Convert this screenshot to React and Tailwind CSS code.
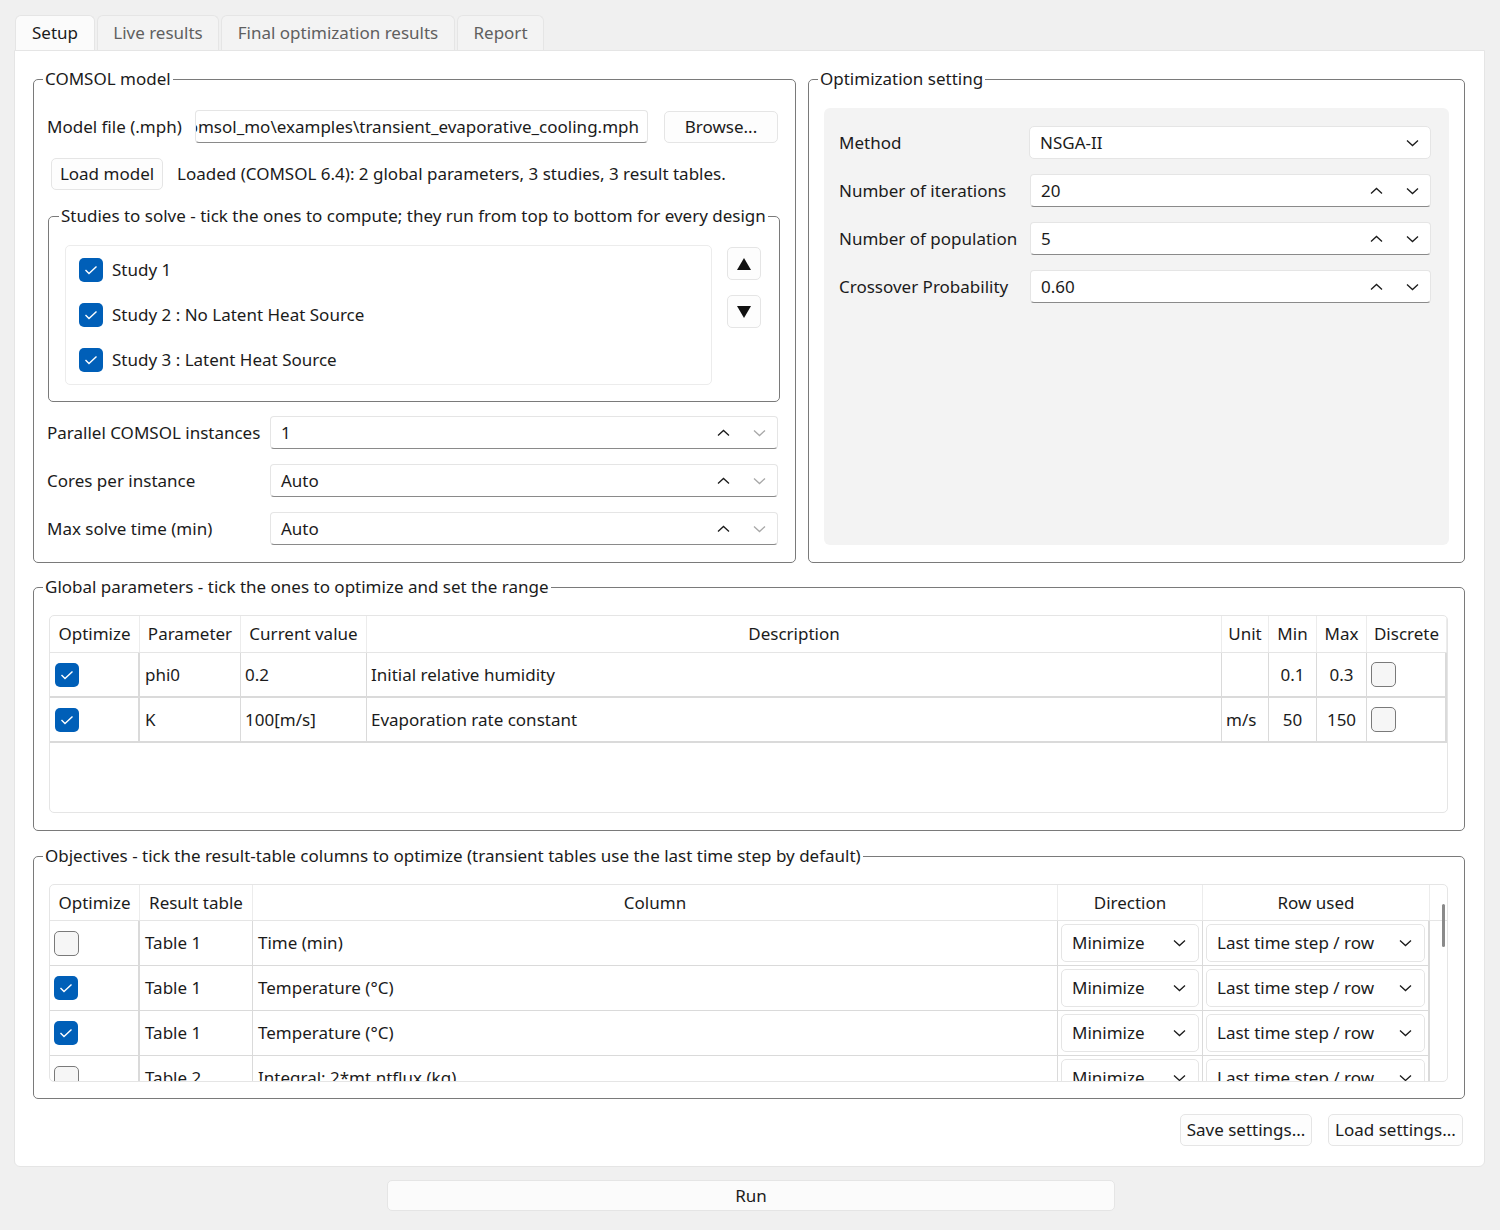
import React from 'react';

const ChevronDown = ({ className = 'text-[#1b1b1b]' }) => (
  <svg width="13" height="8" viewBox="0 0 13 8" fill="none" className={className}>
    <path d="M1 1.5L6.5 6.5L12 1.5" stroke="currentColor" strokeWidth="1.3" />
  </svg>
);

const ChevronUp = ({ className = 'text-[#1b1b1b]' }) => (
  <svg width="13" height="8" viewBox="0 0 13 8" fill="none" className={className}>
    <path d="M1 6.5L6.5 1.5L12 6.5" stroke="currentColor" strokeWidth="1.3" />
  </svg>
);

const Check = ({ checked }) =>
  checked ? (
    <span className="flex h-[24px] w-[24px] shrink-0 items-center justify-center rounded-[5px] bg-[#005fb8]">
      <svg width="14" height="10" viewBox="0 0 14 10" fill="none">
        <path d="M1.5 5L5 8.5L12.5 1.5" stroke="white" strokeWidth="1.4" />
      </svg>
    </span>
  ) : (
    <span className="h-[25px] w-[25px] shrink-0 rounded-[5px] border border-[#7a7a7a] bg-[#f6f6f6]" />
  );

const Group = ({ title, className = '', children }) => (
  <fieldset className={`min-w-0 rounded-[5px] border border-[#7a7a7a] ${className}`}>
    <legend className="ml-[9px] px-[2px] leading-[24px]">{title}</legend>
    {children}
  </fieldset>
);

const Button = ({ label, className = '' }) => (
  <button
    type="button"
    className={`flex h-[32px] items-center justify-center rounded-[5px] border border-[#e5e5e5] bg-[#fdfdfd] ${className}`}
  >
    {label}
  </button>
);

const Spin = ({ value, downDisabled, className = '' }) => (
  <div
    className={`flex h-[33px] items-center rounded-[4px] border border-[#e5e5e5] border-b-[#8a8a8a] bg-white pl-[10px] pr-[11px] ${className}`}
  >
    <span className="flex-1">{value}</span>
    <ChevronUp />
    <span className="ml-[23px]">
      <ChevronDown className={downDisabled ? 'text-[#a8a8a8]' : 'text-[#1b1b1b]'} />
    </span>
  </div>
);

const Combo = ({ value, className = '' }) => (
  <div
    className={`flex items-center justify-between rounded-[5px] border border-[#e5e5e5] bg-white pl-[10px] pr-[11px] ${className}`}
  >
    <span>{value}</span>
    <ChevronDown />
  </div>
);

const Triangle = ({ down }) => (
  <svg width="14" height="12" viewBox="0 0 14 12">
    <polygon points={down ? '0,0 14,0 7,12' : '7,0 14,12 0,12'} fill="#111" />
  </svg>
);

const tabs = [
  { label: 'Setup', w: 'w-[80px]' },
  { label: 'Live results', w: 'w-[122px]' },
  { label: 'Final optimization results', w: 'w-[234px]' },
  { label: 'Report', w: 'w-[87px]' },
];

const studies = ['Study 1', 'Study 2 : No Latent Heat Source', 'Study 3 : Latent Heat Source'];

const spins = [
  { label: 'Parallel COMSOL instances', value: '1' },
  { label: 'Cores per instance', value: 'Auto' },
  { label: 'Max solve time (min)', value: 'Auto' },
];

const optRows = [
  { label: 'Number of iterations', value: '20' },
  { label: 'Number of population', value: '5' },
  { label: 'Crossover Probability', value: '0.60' },
];

const params = [
  { name: 'phi0', value: '0.2', desc: 'Initial relative humidity', unit: '', min: '0.1', max: '0.3' },
  { name: 'K', value: '100[m/s]', desc: 'Evaporation rate constant', unit: 'm/s', min: '50', max: '150' },
];

const objectives = [
  { checked: false, table: 'Table 1', column: 'Time (min)' },
  { checked: true, table: 'Table 1', column: 'Temperature (°C)' },
  { checked: true, table: 'Table 1', column: 'Temperature (°C)' },
  { checked: false, table: 'Table 2', column: 'Integral: 2*mt.ntflux (kg)' },
];

const gCols = 'grid grid-cols-[90px_101px_126px_855px_47px_48px_50px_1fr]';
const oCols = 'grid grid-cols-[90px_113px_805px_145px_227px_1fr]';
const hCell = 'flex items-center justify-center border-r border-[#ececec]';
const bCell = 'flex items-center border-r border-[#dadada]';

export default function App() {
  return (
    <div className="min-h-[1230px] bg-[#f0f0f0] px-[14px] pt-[15px] font-['Noto_Sans',sans-serif] text-[17px] leading-[22px] text-[#1b1b1b]">
      {/* tab bar */}
      <div className="flex gap-[2px] pl-[1px]">
        {tabs.map((t, i) => (
          <div
            key={t.label}
            className={`flex h-[35px] items-center justify-center whitespace-nowrap rounded-t-[6px] border border-b-0 border-[#e5e5e5] ${t.w} ${
              i === 0 ? 'bg-[#fbfbfb] text-[#1b1b1b]' : 'bg-[#f3f3f3] text-[#5f5f5f]'
            }`}
          >
            {t.label}
          </div>
        ))}
      </div>

      {/* tab page */}
      <div className="w-[1471px] rounded-b-[6px] border border-[#e5e5e5] bg-white pl-[18px] pr-[19px] pt-[16px] pb-[20px]">
        <div className="flex gap-[12px]">
          <Group title="COMSOL model" className="h-[496px] w-[763px]">
            <div className="pl-[13px] pr-[17px] pt-[19px]">
              <div className="flex h-[33px] items-center">
                <span className="w-[148px] shrink-0">Model file (.mph)</span>
                <div className="flex h-[33px] min-w-0 flex-1 items-center justify-end overflow-hidden rounded-[4px] border border-[#e5e5e5] border-b-[#8a8a8a] bg-white px-[1px]">
                  <span className="whitespace-nowrap pr-[7px]">
                    comsol_mo\examples\transient_evaporative_cooling.mph
                  </span>
                </div>
                <Button label="Browse..." className="ml-[16px] w-[114px] shrink-0" />
              </div>

              <div className="mt-[15px] flex items-center">
                <Button label="Load model" className="ml-[4px] w-[112px]" />
                <span className="ml-[14px]">
                  Loaded (COMSOL 6.4): 2 global parameters, 3 studies, 3 result tables.
                </span>
              </div>

              <fieldset className="ml-[1px] -mr-[2px] mt-[14px] h-[198px] min-w-0 rounded-[5px] border border-[#7a7a7a]">
                <legend className="ml-[10px] px-[2px] leading-[24px]">
                  Studies to solve - tick the ones to compute; they run from top to bottom for every design
                </legend>
                <div className="flex pl-[16px] pt-[17px]">
                  <div className="h-[140px] w-[647px] rounded-[5px] border border-[#ececec] pl-[13px] pt-[1px]">
                    {studies.map((s) => (
                      <div key={s} className="flex h-[45px] items-center gap-[9px]">
                        <Check checked />
                        <span>{s}</span>
                      </div>
                    ))}
                  </div>
                  <div className="ml-[15px] mt-[2px] flex flex-col gap-[15px]">
                    <button
                      type="button"
                      className="flex h-[33px] w-[34px] items-center justify-center rounded-[5px] border border-[#e5e5e5] bg-[#fdfdfd]"
                    >
                      <Triangle />
                    </button>
                    <button
                      type="button"
                      className="flex h-[33px] w-[34px] items-center justify-center rounded-[5px] border border-[#e5e5e5] bg-[#fdfdfd]"
                    >
                      <Triangle down />
                    </button>
                  </div>
                </div>
              </fieldset>

              <div className="mt-[14px] flex flex-col gap-[15px]">
                {spins.map((s) => (
                  <div key={s.label} className="flex items-center">
                    <span className="w-[223px] shrink-0">{s.label}</span>
                    <Spin value={s.value} downDisabled className="flex-1" />
                  </div>
                ))}
              </div>
            </div>
          </Group>

          <Group title="Optimization setting" className="h-[496px] flex-1">
            <div className="px-[15px] pt-[17px]">
              <div className="flex h-[437px] flex-col gap-[15px] rounded-[6px] bg-[#f3f3f3] pl-[15px] pr-[18px] pt-[18px]">
                <div className="flex items-center">
                  <span className="w-[190px] shrink-0">Method</span>
                  <Combo value="NSGA-II" className="h-[33px] flex-1" />
                </div>
                {optRows.map((r) => (
                  <div key={r.label} className="flex items-center">
                    <span className="w-[191px] shrink-0">{r.label}</span>
                    <Spin value={r.value} className="flex-1 pl-[9px]" />
                  </div>
                ))}
              </div>
            </div>
          </Group>
        </div>

        <Group title="Global parameters - tick the ones to optimize and set the range" className="mt-[12px] h-[256px]">
          <div className="pl-[15px] pr-[16px] pt-[16px]">
            <div className="h-[198px] overflow-hidden rounded-[5px] border border-[#e5e5e5]">
              <div className={`${gCols} h-[37px] border-b border-[#e5e5e5]`}>
                {['Optimize', 'Parameter', 'Current value', 'Description', 'Unit', 'Min', 'Max', 'Discrete'].map((h) => (
                  <div key={h} className={hCell}>
                    {h}
                  </div>
                ))}
              </div>
              {params.map((p) => (
                <div key={p.name} className={`${gCols} h-[45px] border-b-2 border-[#dadada]`}>
                  <div className="flex items-center border-r-2 border-[#dadada] pl-[5px]">
                    <Check checked />
                  </div>
                  <div className={`${bCell} pl-[5px]`}>{p.name}</div>
                  <div className={`${bCell} pl-[4px]`}>{p.value}</div>
                  <div className={`${bCell} pl-[4px]`}>{p.desc}</div>
                  <div className={`${bCell} pl-[4px]`}>{p.unit}</div>
                  <div className={`${bCell} justify-center`}>{p.min}</div>
                  <div className={`${bCell} justify-center`}>{p.max}</div>
                  <div className="flex items-center border-r-2 border-[#dadada] pl-[4px]">
                    <Check />
                  </div>
                </div>
              ))}
            </div>
          </div>
        </Group>

        <Group
          title="Objectives - tick the result-table columns to optimize (transient tables use the last time step by default)"
          className="mt-[13px] h-[255px]"
        >
          <div className="pl-[15px] pr-[16px] pt-[16px]">
            <div className="relative h-[198px] overflow-hidden rounded-[5px] border border-[#e5e5e5]">
              <div className={`${oCols} h-[36px] border-b border-[#e5e5e5]`}>
                {['Optimize', 'Result table', 'Column', 'Direction', 'Row used'].map((h) => (
                  <div key={h} className={hCell}>
                    {h}
                  </div>
                ))}
                <div />
              </div>
              {objectives.map((o, i) => (
                <div key={i} className={`${oCols} h-[45px]`}>
                  <div className="flex items-center border-b border-r-2 border-[#dadada] pl-[4px]">
                    <Check checked={o.checked} />
                  </div>
                  <div className={`${bCell} border-b pl-[5px]`}>{o.table}</div>
                  <div className={`${bCell} border-b pl-[5px]`}>{o.column}</div>
                  <div className="border-b border-r border-[#dadada] p-[3px]">
                    <Combo value="Minimize" className="h-full pr-[12px]" />
                  </div>
                  <div className="border-b border-r-2 border-[#dadada] p-[3px]">
                    <Combo value="Last time step / row" className="h-full pr-[12px]" />
                  </div>
                  <div />
                </div>
              ))}
              <div className="absolute right-[2px] top-[19px] h-[43px] w-[3px] rounded-full bg-[#8a8a8a]" />
            </div>
          </div>
        </Group>

        <div className="mr-[2px] mt-[15px] flex justify-end gap-[16px]">
          <Button label="Save settings..." className="w-[132px]" />
          <Button label="Load settings..." className="w-[135px]" />
        </div>
      </div>

      <button
        type="button"
        className="ml-[373px] mt-[13px] flex h-[31px] w-[728px] items-center justify-center rounded-[5px] border border-[#e5e5e5] bg-[#fbfbfb]"
      >
        Run
      </button>
    </div>
  );
}
